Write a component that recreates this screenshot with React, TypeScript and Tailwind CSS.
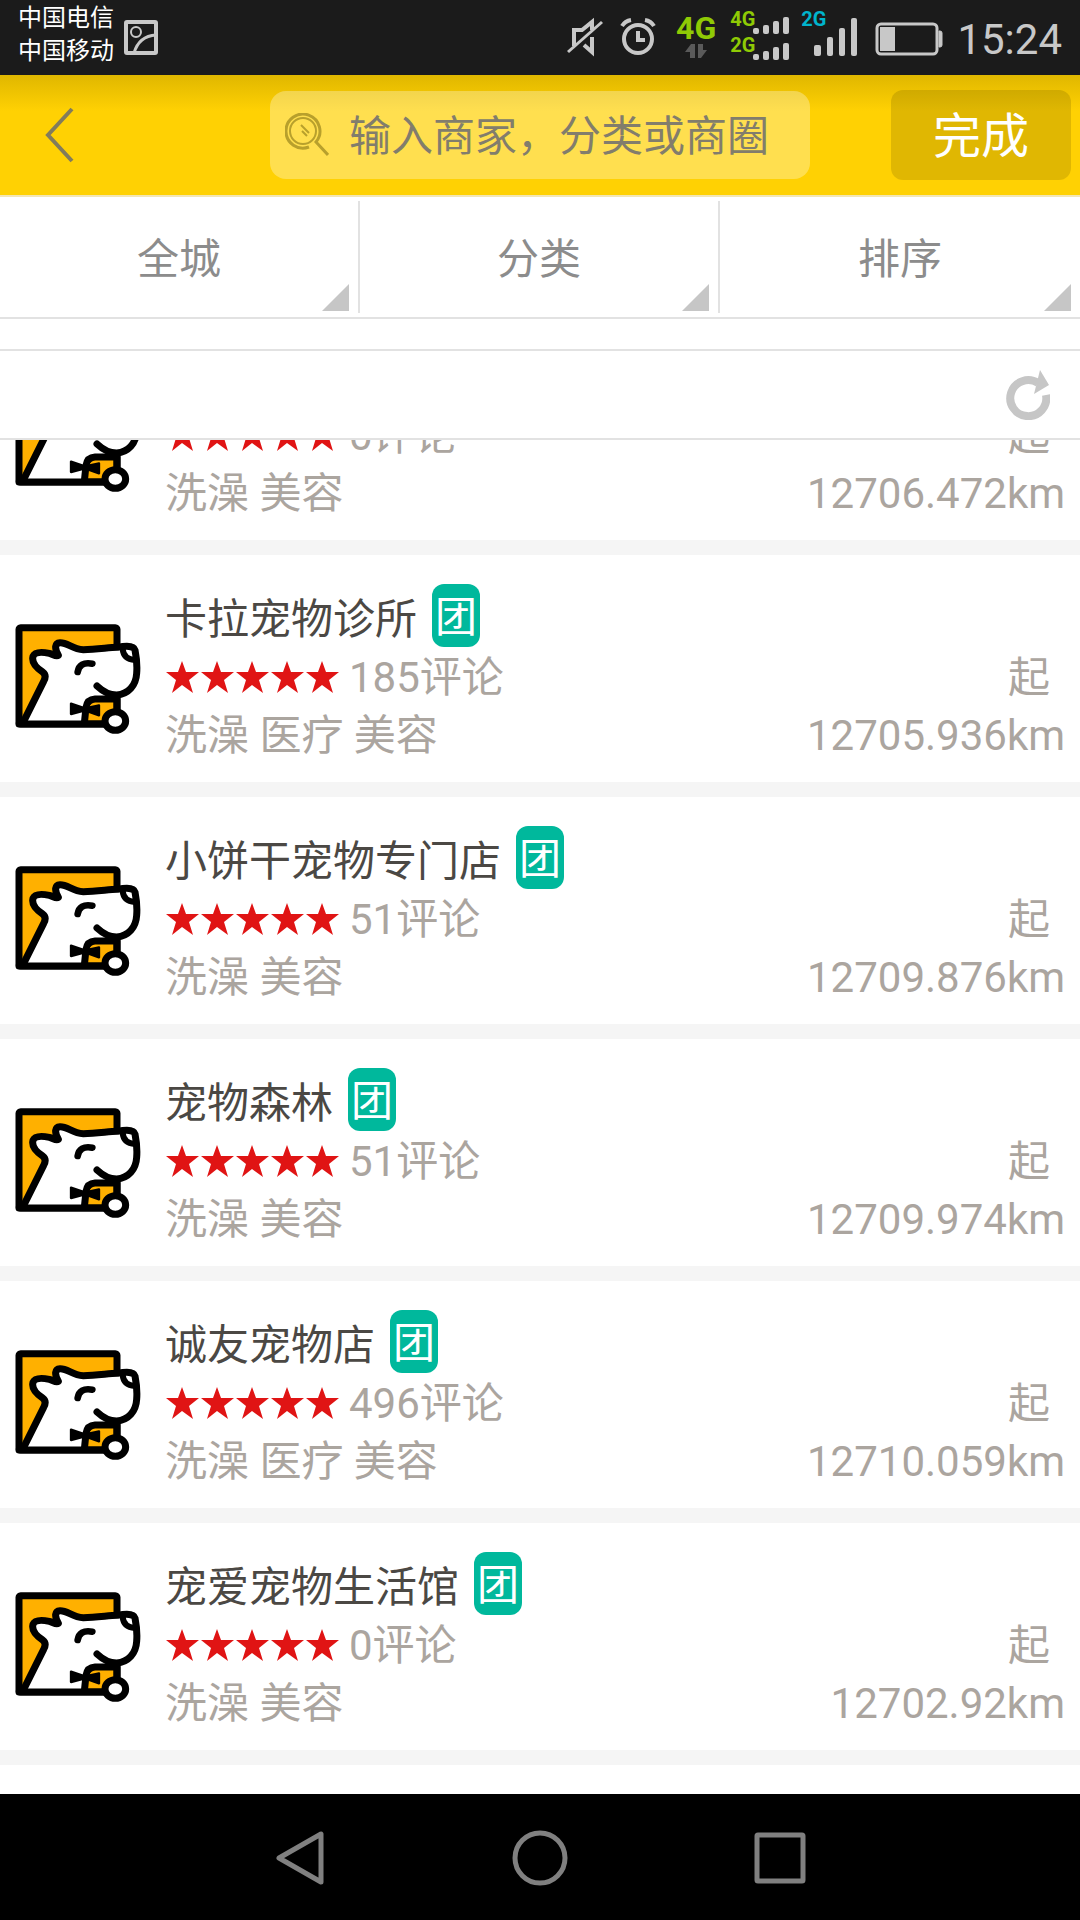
import { useState } from 'react';
import clsx from 'clsx';

interface Shop {
  id: number;
  name?: string;
  comments: number;
  tags: string[];
  distance: string;
}

const SHOPS: Shop[] = [
  { id: 1, comments: 0, tags: ['洗澡', '美容'], distance: '12706.472km' },
  { id: 2, name: '卡拉宠物诊所', comments: 185, tags: ['洗澡', '医疗', '美容'], distance: '12705.936km' },
  { id: 3, name: '小饼干宠物专门店', comments: 51, tags: ['洗澡', '美容'], distance: '12709.876km' },
  { id: 4, name: '宠物森林', comments: 51, tags: ['洗澡', '美容'], distance: '12709.974km' },
  { id: 5, name: '诚友宠物店', comments: 496, tags: ['洗澡', '医疗', '美容'], distance: '12710.059km' },
  { id: 6, name: '宠爱宠物生活馆', comments: 0, tags: ['洗澡', '美容'], distance: '12702.92km' },
];

const FILTERS = ['全城', '分类', '排序'];

const DogLogo = () => (
  <svg viewBox="45 42 378 330" className="w-[126px] h-[110px] shrink-0" fill="none" stroke="#000" strokeWidth="21" strokeLinecap="round" strokeLinejoin="round">
    <rect x="57" y="53" width="294" height="289" rx="5" fill="#ffb000" />
    <path
      d="M68 337 L131 214 Q141 196 128 186 C108 173 94 158 99 139 C105 124 128 126 148 130 C160 133 168 141 175 136 C163 115 164 99 180 98 C203 97 216 117 250 119 C290 118 325 113 352 112 C380 106 402 108 405 120 C409 140 412 165 410 190 C408 226 385 253 350 255 L285 266 Q262 268 258 292 L253 342 Z"
      fill="#fff"
      stroke="none"
    />
    <path d="M68 340 L131 214 Q141 196 128 186 C108 173 94 158 99 139 C105 124 128 126 148 130 C160 133 168 141 175 136 C163 115 164 99 180 98 C203 97 216 117 250 119 C290 118 325 113 352 112 C380 106 402 108 405 120 C409 140 412 165 410 190 C408 226 385 253 350 255 C326 255 309 245 291 228" />
    <path d="M57 342 H330" />
    <path d="M351 267 H285 Q262 268 258 292 L253 340 M351 267 V305" />
    <path d="M368 116 Q370 148 405 150" strokeWidth="18" />
    <path d="M233 186 Q238 154 277 161" strokeWidth="20" />
    <path d="M213 281 V312 L255 301 L297 316 V286 L255 295 Z" fill="#000" strokeWidth="7" />
    <ellipse cx="346" cy="333" rx="31" ry="28" fill="#fff" />
  </svg>
);

const Star = () => (
  <svg viewBox="0 0 35 35" className="size-[35px]" fill="#e01414">
    <path d="M17 1 L21 12 H34 L24 20 L28 33 L17 25 L7 33 L11 20 L1 12 H13 Z" />
  </svg>
);

const SmallSignal = () => (
  <svg viewBox="0 0 36 17" className="w-9 h-[17px] -mb-[5px] -ml-[2px]" fill="#c8c8c8">
    <rect x="0" y="11" width="6" height="6" rx="2" />
    <rect x="10" y="8" width="6" height="9" rx="2" />
    <rect x="20" y="4" width="6" height="13" rx="2" />
    <rect x="30" y="0" width="6" height="17" rx="2" />
  </svg>
);

const LargeSignal = () => (
  <svg viewBox="0 0 43 38" className="w-[43px] h-[38px] mt-[18px] -ml-3" fill="#c8c8c8">
    <rect x="0" y="27" width="7" height="11" rx="2" />
    <rect x="13" y="19" width="6" height="19" rx="2" />
    <rect x="25" y="10" width="6" height="28" rx="2" />
    <rect x="37" y="0" width="6" height="38" rx="2" />
  </svg>
);

const StatusBar = () => (
  <div className="flex items-start h-[75px] bg-[#1b1b1b] pl-[18px] pr-[18px] text-[#c8c8c8]">
    <div className="text-2xl/[33px] text-white pt-[2px]">
      <p>中国电信</p>
      <p>中国移动</p>
    </div>
    <svg viewBox="0 0 34 35" className="w-[34px] h-[35px] mt-5 ml-[10px]" fill="none" stroke="#c8c8c8" strokeWidth="3">
      <rect x="2" y="2" width="30" height="31" rx="1" strokeWidth="4" />
      <circle cx="12" cy="12" r="5" strokeWidth="2" />
      <path d="M10 33 Q15 16 32 15" />
    </svg>

    <div className="ml-auto flex items-start">
      <svg viewBox="0 0 38 40" className="w-[38px] h-10 mt-[17px]" fill="none" stroke="#c8c8c8" strokeWidth="3">
        <path d="M8 29 V13 H16 L26 5 V13 M26 20 V35 L18 28" strokeWidth="4" />
        <path d="M2 35 L36 5" />
      </svg>
      <svg viewBox="0 0 36 40" className="w-9 h-10 mt-[17px] ml-4" fill="none" stroke="#c8c8c8" strokeWidth="4">
        <circle cx="18" cy="22" r="14" />
        <path d="M18 14 V23 H25" />
        <path d="M2 9 Q5 4 11 3 M34 9 Q31 4 25 3" />
      </svg>
      <div className="flex flex-col items-center ml-5 mt-3">
        <span className="font-bold text-[32px]/8 text-[#8fca05]">4G</span>
        <svg viewBox="0 0 22 14" className="w-[22px] h-[14px]" fill="#5a5a5a">
          <path d="M0 8 L6 0 H10 V14 H5 V8 Z" />
          <path d="M22 6 L16 14 H13 V0 H18 V6 Z" />
        </svg>
      </div>
      <div className="flex flex-col gap-[6px] ml-[14px] mt-[9px] font-bold text-xl/5 text-[#8fca05]">
        {['4G', '2G'].map(label => (
          <div key={label} className="flex items-end">
            <span>{label}</span>
            <SmallSignal />
          </div>
        ))}
      </div>
      <div className="flex items-start ml-3">
        <span className="mt-[9px] font-bold text-xl/5 text-[#00b4cc]">2G</span>
        <LargeSignal />
      </div>
      <svg viewBox="0 0 68 34" className="w-[68px] h-[34px] mt-[22px] ml-[18px]" fill="none">
        <rect x="2" y="2" width="60" height="30" rx="4" stroke="#c8c8c8" strokeWidth="3" />
        <rect x="5" y="5" width="15" height="24" fill="#c8c8c8" />
        <path d="M64 9 H65 Q67 9 67 11 V23 Q67 25 65 25 H64 Z" fill="#c8c8c8" stroke="#c8c8c8" />
      </svg>
      <time className="ml-[14px] mt-[15px] text-[42px]/[50px]">15:24</time>
    </div>
  </div>
);

const SearchHeader = () => {
  const [keyword, setKeyword] = useState('');

  return (
    <header className="grid grid-cols-[minmax(0,1fr)_minmax(0,2fr)_minmax(0,1fr)] items-center h-[122px] border-b-2 border-[#f3e6b4] bg-[#ffd103] bg-linear-to-b from-[#e0b700] to-[#ffd103] to-30%">
      <button aria-label="返回" className="justify-self-start pl-[45px] pr-8 py-4">
        <svg viewBox="0 0 30 56" className="w-[30px] h-14" fill="none" stroke="#827c5c" strokeWidth="4">
          <path d="M27 2 L3 28 L27 54" />
        </svg>
      </button>
      <label className="flex items-center h-[88px] rounded-2xl bg-white/30 pl-[15px] gap-5">
        <svg viewBox="0 0 44 44" className="size-11 shrink-0" fill="none" stroke="#b8a02c" strokeWidth="2">
          <circle cx="18" cy="18" r="13" />
          <path d="M24 34 A17 17 0 1 1 31 29 L43 42" strokeWidth="3" />
          <path d="M16 12 L24 20 M17 18 L22 23" />
        </svg>
        <input
          type="text"
          aria-label="搜索"
          value={keyword}
          onChange={e => setKeyword(e.target.value)}
          placeholder="输入商家，分类或商圈"
          className="flex-1 min-w-0 pt-1 bg-transparent text-[42px]/[60px] text-[#827d6c] placeholder:text-[#827d6c] outline-none"
        />
      </label>
      <button className="justify-self-end mr-[9px] w-[180px] h-[90px] pt-1 rounded-xl bg-black/12 text-5xl text-white">
        完成
      </button>
    </header>
  );
};

const FilterTabs = () => (
  <nav className="grid grid-cols-3 h-[122px] border-b-2 border-[#e2e2e2] py-1">
    {FILTERS.map((label, i) => (
      <button
        key={label}
        className={clsx(
          'relative pt-1 text-[42px] text-[#8c8c8c]',
          i < FILTERS.length - 1 && 'border-r-2 border-[#e2e2e2]'
        )}
      >
        {label}
        <svg viewBox="0 0 27 27" className="absolute right-[9px] bottom-[2px] size-[27px]" fill="#c6c6c6">
          <path d="M27 0 V27 H0 Z" />
        </svg>
      </button>
    ))}
  </nav>
);

const ShopRow = ({ shop }: { shop: Shop }) => (
  <li className="flex items-start h-[242px] border-b-[15px] border-[#f5f5f5] bg-white px-[15px] pt-9">
    <div className="pt-[33px]">
      <DogLogo />
    </div>
    <div className="flex-1 ml-6 text-[42px]/[58px] text-[#aba59f]">
      <div className="flex items-start h-[58px]">
        {shop.name && (
          <>
            <h2 className="text-[#4b4844]">{shop.name}</h2>
            <span className="-mt-[7px] ml-[15px] px-[3px] pt-1 rounded-xl bg-[#00b89c] text-[42px]/[59px] text-white">团</span>
          </>
        )}
      </div>
      <div className="flex items-center">
        <div className="flex pb-[2px]" role="img" aria-label="五星">
          {Array.from({ length: 5 }, (_, i) => (
            <Star key={i} />
          ))}
        </div>
        <span className="ml-[9px]">{shop.comments}评论</span>
        <span className="ml-auto mr-[15px]">起</span>
      </div>
      <div className="flex justify-between">
        <span>{shop.tags.join(' ')}</span>
        <span>{shop.distance}</span>
      </div>
    </div>
  </li>
);

const NavBar = () => (
  <div className="mt-auto grid grid-cols-3 h-[126px] pt-[2px] bg-black px-[calc(100%/6)]">
    <button aria-label="后退" className="flex items-center justify-center">
      <svg viewBox="0 0 56 56" className="size-14" fill="none" stroke="#808080" strokeWidth="5" strokeLinejoin="round">
        <path d="M49 4 V52 L7 28 Z" />
      </svg>
    </button>
    <button aria-label="主页" className="flex items-center justify-center">
      <svg viewBox="0 0 56 56" className="size-14" fill="none" stroke="#808080" strokeWidth="5">
        <circle cx="28" cy="28" r="25" />
      </svg>
    </button>
    <button aria-label="最近任务" className="flex items-center justify-center">
      <svg viewBox="0 0 56 56" className="size-14" fill="none" stroke="#808080" strokeWidth="5">
        <rect x="5" y="5" width="46" height="46" rx="1" />
      </svg>
    </button>
  </div>
);

const App = () => (
  <div className="flex flex-col min-h-screen bg-white font-[Roboto,'Noto_Sans_CJK_SC',sans-serif]">
    <StatusBar />
    <SearchHeader />
    <FilterTabs />
    <div className="mt-[30px] flex items-center justify-end h-[91px] border-y-2 border-[#e2e2e2] pr-[30px]">
      <button aria-label="刷新">
        <svg viewBox="0 0 44 50" className="w-11 h-[50px]" fill="none">
          <path d="M32 13 A18 18 0 1 0 40 25" stroke="#c6c6c6" strokeWidth="8" />
          <path d="M34 0 L43 15 L28 24 Z" fill="#c6c6c6" />
        </svg>
      </button>
    </div>
    {/* list is scrolled part-way through its first row */}
    <main className="overflow-hidden pb-[29px]">
      <ul className="-mt-[127px]">
        {SHOPS.map(shop => (
          <ShopRow key={shop.id} shop={shop} />
        ))}
      </ul>
    </main>
    <NavBar />
  </div>
);

export default App;
